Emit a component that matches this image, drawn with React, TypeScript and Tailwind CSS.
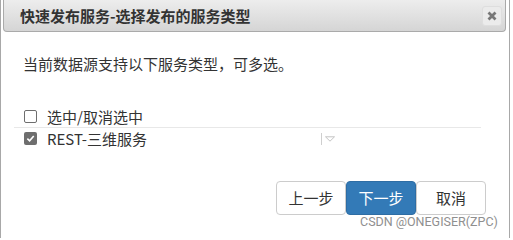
import React from "react";

const cjk = { fontFamily: '"Noto Sans CJK SC", "Noto Sans", sans-serif' };

function Checkbox({ checked }: { checked?: boolean }) {
  if (checked) {
    return (
      <span className="flex items-center justify-center w-[13px] h-[13px] rounded-[2px] bg-[#6e6e6e]">
        <svg width="9" height="9" viewBox="0 0 10 10">
          <path d="M1.5 5.2 L4 7.6 L8.6 2.2" fill="none" stroke="#fff" strokeWidth="1.8" />
        </svg>
      </span>
    );
  }
  return <span className="block w-[13px] h-[13px] rounded-[2px] border border-[#6e6e6e] bg-white" />;
}

export default function App() {
  return (
    <div className="relative w-[513px] h-[238px] overflow-hidden bg-white text-[#333]" style={cjk}>
      <div className="w-[510px] h-full border-x border-[#a8a8a8] pl-[2px] pr-[3px]">
        {/* Title bar */}
        <div className="flex items-center justify-between h-[32px] border border-t-0 border-[#aaaaaa] rounded-b-[4px] bg-gradient-to-b from-[#ededed] to-[#d5d5d5] pl-[16px] pr-[3px]">
          <span className="text-[15px] font-bold leading-[20px] text-[#333]">
            快速发布服务-选择发布的服务类型
          </span>
          <button className="flex items-center justify-center w-[20px] h-[20px] rounded-[3px] border border-[#dedede] bg-[#ebebeb]">
            <svg width="10" height="10" viewBox="0 0 10 10">
              <path d="M1.5 1.5 L8.5 8.5 M8.5 1.5 L1.5 8.5" stroke="#777" strokeWidth="2.8" />
            </svg>
          </button>
        </div>
      </div>

      {/* Body */}
      <div className="absolute inset-x-[1px] top-[32px] bottom-0">
        <div className="pl-[13px]">
          <p className="mt-[21px] pl-[9px] text-[15px] leading-[21px]">当前数据源支持以下服务类型，可多选。</p>

          <div className="mt-[32px] w-[467px]">
            <div className="flex items-center h-[21px] pl-[10px] gap-[10px]">
              <Checkbox />
              <span className="text-[15px] leading-[21px]">选中/取消选中</span>
            </div>
            <div className="h-px bg-[#e8e8e8]" />
            <div className="flex items-center h-[21px] pl-[10px] gap-[10px]">
              <Checkbox checked />
              <span className="w-[264px] text-[15px] leading-[21px]">REST-三维服务</span>
              <span className="flex items-center gap-[3px]">
                <span className="block w-px h-[12px] bg-[#cfcfcf]" />
                <svg width="10" height="6" viewBox="0 0 10 6">
                  <path d="M0.5 0.8 H9.5 L5 5.2 Z" fill="none" stroke="#c4c4c4" strokeWidth="1" />
                </svg>
              </span>
            </div>
          </div>
        </div>

        {/* Buttons */}
        <div className="mt-[32px] flex justify-end pr-[26px]">
          <button className="w-[70px] h-[34px] rounded-[4px] border border-[#cccccc] bg-white text-[15px] text-[#333]">
            上一步
          </button>
          <button className="w-[70px] h-[34px] rounded-[4px] border border-[#2e6da4] bg-[#337ab7] text-[15px] text-white">
            下一步
          </button>
          <button className="w-[70px] h-[34px] rounded-[4px] border border-[#cccccc] bg-white text-[15px] text-[#333]">
            取消
          </button>
        </div>
      </div>

      {/* Watermark */}
      <span
        className="absolute left-[360px] top-[214px] text-[12.5px] leading-[16px] text-[#8f8f8f]"
        style={{ fontFamily: "Roboto, sans-serif" }}
      >
        CSDN @ONEGISER(ZPC)
      </span>
    </div>
  );
}
